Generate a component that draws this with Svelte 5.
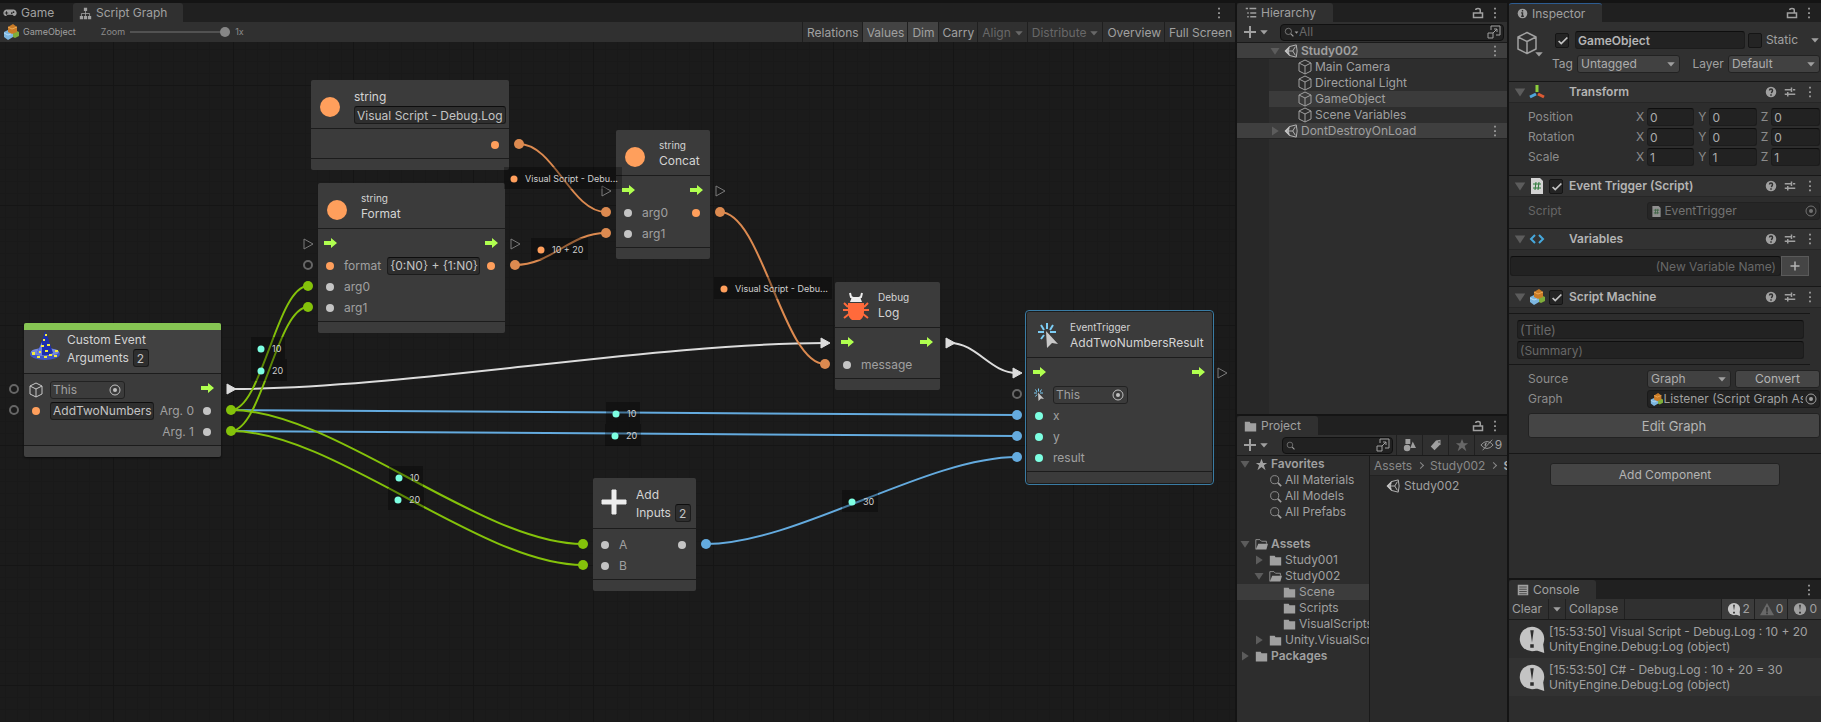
<script lang="ts">
	type Side = {
		kind: 'flow' | 'value';
		tone?: string;
		icon?: string;
		label?: string;
		field?: string;
		fieldWidth?: number;
		object?: boolean;
		pin?: string;
	};
	type Row = { left?: Side; right?: Side };
	type GraphNode = {
		id: string;
		x: number;
		y: number;
		w: number;
		head: number;
		icon: string;
		title: string;
		subtitle?: string;
		count?: string;
		text?: string;
		event?: boolean;
		selected?: boolean;
		rows: Row[];
	};

	const ORANGE = '#ff9f5c';
	const AQUA = '#7dffe2';
	const GREY = '#c4c4c4';
	const W_ORANGE = '#dc8a50';
	const W_GREEN = '#84c20a';
	const W_BLUE = '#64abdf';
	const W_WHITE = '#dcdcdc';

	const nodes: GraphNode[] = [
		{
			id: 'literal', x: 311, y: 38, w: 198, head: 48, icon: 'orb', title: 'string', text: 'Visual Script - Debug.Log',
			rows: [{ right: { kind: 'value', tone: ORANGE, pin: W_ORANGE } }]
		},
		{
			id: 'format', x: 318, y: 141, w: 187, head: 45, icon: 'orb', subtitle: 'string', title: 'Format',
			rows: [
				{ left: { kind: 'flow' }, right: { kind: 'flow' } },
				{
					left: { kind: 'value', tone: ORANGE, label: 'format', field: '{0:N0} + {1:N0}', fieldWidth: 93 },
					right: { kind: 'value', tone: ORANGE, pin: W_ORANGE }
				},
				{ left: { kind: 'value', tone: GREY, label: 'arg0', pin: W_GREEN } },
				{ left: { kind: 'value', tone: GREY, label: 'arg1', pin: W_GREEN } }
			]
		},
		{
			id: 'event', x: 24, y: 281, w: 197, head: 50, icon: 'hat', title: 'Custom Event', count: 'Arguments', event: true,
			rows: [
				{ left: { kind: 'value', icon: 'cube', field: 'This', object: true }, right: { kind: 'flow', pin: W_WHITE } },
				{
					left: { kind: 'value', tone: ORANGE, field: 'AddTwoNumbers', fieldWidth: 104 },
					right: { kind: 'value', tone: GREY, label: 'Arg. 0', pin: W_GREEN }
				},
				{ right: { kind: 'value', tone: GREY, label: 'Arg. 1', pin: W_GREEN } }
			]
		},
		{
			id: 'concat', x: 616, y: 88, w: 94, head: 45, icon: 'orb', subtitle: 'string', title: 'Concat',
			rows: [
				{ left: { kind: 'flow' }, right: { kind: 'flow' } },
				{
					left: { kind: 'value', tone: GREY, label: 'arg0', pin: W_ORANGE },
					right: { kind: 'value', tone: ORANGE, pin: W_ORANGE }
				},
				{ left: { kind: 'value', tone: GREY, label: 'arg1', pin: W_ORANGE } }
			]
		},
		{
			id: 'log', x: 835, y: 240, w: 105, head: 45, icon: 'bug', subtitle: 'Debug', title: 'Log',
			rows: [
				{ left: { kind: 'flow', pin: W_WHITE }, right: { kind: 'flow', pin: W_WHITE } },
				{ left: { kind: 'value', tone: GREY, label: 'message', pin: W_ORANGE } }
			]
		},
		{
			id: 'trigger', x: 1027, y: 270, w: 185, head: 45, icon: 'click', subtitle: 'EventTrigger', title: 'AddTwoNumbersResult',
			selected: true,
			rows: [
				{ left: { kind: 'flow', pin: W_WHITE }, right: { kind: 'flow' } },
				{ left: { kind: 'value', icon: 'click', field: 'This', object: true } },
				{ left: { kind: 'value', tone: AQUA, label: 'x', pin: W_BLUE } },
				{ left: { kind: 'value', tone: AQUA, label: 'y', pin: W_BLUE } },
				{ left: { kind: 'value', tone: AQUA, label: 'result', pin: W_BLUE } }
			]
		},
		{
			id: 'add', x: 593, y: 436, w: 103, head: 50, icon: 'plus', title: 'Add', count: 'Inputs',
			rows: [
				{
					left: { kind: 'value', tone: GREY, label: 'A', pin: W_GREEN },
					right: { kind: 'value', tone: GREY, pin: W_BLUE }
				},
				{ left: { kind: 'value', tone: GREY, label: 'B', pin: W_GREEN } }
			]
		}
	];

	// [from node, row, to node, row, color]
	const links: [string, number, string, number, string][] = [
		['event', 0, 'log', 0, W_WHITE],
		['log', 0, 'trigger', 0, W_WHITE],
		['event', 1, 'trigger', 2, W_BLUE],
		['event', 2, 'trigger', 3, W_BLUE],
		['event', 1, 'format', 2, W_GREEN],
		['event', 2, 'format', 3, W_GREEN],
		['event', 1, 'add', 0, W_GREEN],
		['event', 2, 'add', 1, W_GREEN],
		['add', 0, 'trigger', 4, W_BLUE],
		['literal', 0, 'concat', 1, W_ORANGE],
		['format', 1, 'concat', 2, W_ORANGE],
		['concat', 1, 'log', 1, W_ORANGE]
	];

	const values = [
		{ x: 504, y: 125, tone: ORANGE, text: 'Visual Script - Debu...' },
		{ x: 531, y: 196, tone: ORANGE, text: '10 + 20' },
		{ x: 251, y: 295, tone: AQUA, text: '10' },
		{ x: 251, y: 317, tone: AQUA, text: '20' },
		{ x: 714, y: 235, tone: ORANGE, text: 'Visual Script - Debu...' },
		{ x: 606, y: 360, tone: AQUA, text: '10' },
		{ x: 605, y: 382, tone: AQUA, text: '20' },
		{ x: 389, y: 424, tone: AQUA, text: '10' },
		{ x: 388, y: 446, tone: AQUA, text: '20' },
		{ x: 842, y: 448, tone: AQUA, text: '30' }
	];

	const large = ['orb', 'hat', 'bug', 'plus', 'click'];

	function pinAt(node: GraphNode, side: 'left' | 'right', row: number) {
		return {
			x: side === 'left' ? node.x - 10 : node.x + node.w + 10,
			y: node.y + node.head + 16 + row * 21
		};
	}

	function wire([from, fromRow, to, toRow]: [string, number, string, number, string]) {
		const a = pinAt(nodes.find((n) => n.id === from)!, 'right', fromRow);
		const b = pinAt(nodes.find((n) => n.id === to)!, 'left', toRow);
		const dx = b.x - a.x;
		const bend = dx * (dx > 150 ? 0.29 : 0.4);
		return `M${a.x} ${a.y}C${a.x + bend} ${a.y} ${b.x - bend} ${b.y} ${b.x} ${b.y}`;
	}

	const pins = nodes.flatMap((node) =>
		node.rows.flatMap((row, i) =>
			(['left', 'right'] as const)
				.filter((side) => row[side])
				.map((side) => ({ ...pinAt(node, side, i), kind: row[side]!.kind, color: row[side]!.pin }))
		)
	);

	const objects = ['Main Camera', 'Directional Light', 'GameObject', 'Scene Variables'];

	const tree = [
		{ depth: 0, fold: 'open', icon: 'star', text: 'Favorites', bold: true },
		{ depth: 1, icon: 'search', text: 'All Materials' },
		{ depth: 1, icon: 'search', text: 'All Models' },
		{ depth: 1, icon: 'search', text: 'All Prefabs' },
		{ depth: 0, text: '' },
		{ depth: 0, fold: 'open', icon: 'folderOpen', text: 'Assets', bold: true },
		{ depth: 1, fold: 'closed', icon: 'folder', text: 'Study001' },
		{ depth: 1, fold: 'open', icon: 'folderOpen', text: 'Study002' },
		{ depth: 2, icon: 'folder', text: 'Scene', selected: true },
		{ depth: 2, icon: 'folder', text: 'Scripts' },
		{ depth: 2, icon: 'folder', text: 'VisualScripts' },
		{ depth: 1, fold: 'closed', icon: 'folder', text: 'Unity.VisualScripting' },
		{ depth: 0, fold: 'closed', icon: 'folder', text: 'Packages', bold: true }
	];

	const transform = [
		{ label: 'Position', values: ['0', '0', '0'] },
		{ label: 'Rotation', values: ['0', '0', '0'] },
		{ label: 'Scale', values: ['1', '1', '1'] }
	];

	const logs = ['[15:53:50] Visual Script - Debug.Log : 10 + 20', '[15:53:50] C# - Debug.Log : 10 + 20 = 30'];
</script>

{#snippet icon(name: string, size = 16, color = 'currentColor')}
	<svg class="icon" width={size} height={size} viewBox={large.includes(name) ? '0 0 32 32' : '0 0 16 16'} fill={color} aria-hidden="true">
		{#if name === 'orb'}
			<circle cx="14" cy="19" r="10" fill="#ff9f5c" />
		{:else if name === 'hat'}
			<ellipse cx="16" cy="23" rx="15" ry="6" fill="#3f55c4" />
			<ellipse cx="16" cy="21" rx="14" ry="4" fill="#7488da" />
			<path d="M16 0l3 7 5 15q-8 5-16 0l6-15z" fill="#1c2fae" />
			<path d="M13 11l-5 11q2 2 5 3z" fill="#6d7fe0" />
			<path d="M16 3h2v2h-2zM14 8h2v2h-2zM18 13h3v2h-3zM12 14h3v2h-3zM16 19h3v2h-3zM10 20h2v2h-2zM3 21h3v3H3zM8 25h3v2H8zM15 25h3v2h-3zM20 23h3v2h-3zM26 19h3v2h-3zM25 24h3v2h-3z" fill="#f3ea3c" />
		{:else if name === 'bug'}
			<path d="M10 3l1 4 2 1h6l2-1 1-4" fill="none" stroke="#ededed" stroke-width="2" />
			<path d="M12 7h8l2 5H10z" fill="#ededed" />
			<path d="M8 13h16v9q0 5-4 8h-8q-4-3-4-8z" fill="#ff6a3b" />
			<path d="M8 17L4 13M8 20H3M9 24l-5 4M24 17l4-4M24 20h5M23 24l5 4" stroke="#ff6a3b" stroke-width="2" fill="none" />
		{:else if name === 'plus'}
			<path d="M14 4h4v10h10v4H18v10h-4V18H4v-4h10z" fill="#ededed" stroke="#ededed" stroke-linejoin="round" />
		{:else if name === 'click'}
			<path d="M15 3v6M9 5l3 5M21 5l-3 5M6 12h6M24 12h-6M9 19l3-4" stroke="#7ccdf5" stroke-width="2" fill="none" />
			<path d="M14 11l12 13-6-1-5 5z" fill="#c8c8c8" />
		{:else if name === 'arrow'}
			<path d="M2 4h7V1l6 5-6 5V8H2z" fill="#b0ff4f" />
		{:else if name === 'dot'}
			<circle cx="8" cy="8" r="4" />
		{:else if name === 'cube'}
			<path d="M8 1l6 3v8l-6 3-6-3V4zM2 4l6 3 6-3M8 7v8" fill="none" stroke="currentColor" stroke-linejoin="round" />
		{:else if name === 'target'}
			<circle cx="8" cy="8" r="5" fill="none" stroke="currentColor" />
			<circle cx="8" cy="8" r="2" />
		{:else if name === 'gamepad'}
			<path d="M4 4h8a4 4 0 0 1 3 6q-2 3-4 0H5q-2 3-4 0a4 4 0 0 1 3-6z" />
			<path d="M4 6v4M2 8h4" stroke="#1f1f1f" />
			<circle cx="12" cy="7" r="1" fill="#1f1f1f" /><circle cx="10" cy="8" r="1" fill="#1f1f1f" />
		{:else if name === 'sitemap'}
			<path d="M6 1h4v4H6zM1 11h4v4H1zM6 11h4v4H6zM11 11h4v4h-4z" />
			<path d="M8 5v6M3 11V8h10v3" fill="none" stroke="currentColor" />
		{:else if name === 'blocks'}
			<path d="M8 7l4-1 4 2v4l-4 2-4-2z" fill="#7fae3a" />
			<path d="M1 8l4-2 5 2v5l-5 3-4-3z" fill="#7cb6e0" />
			<path d="M1 9l4 2 5-2" fill="none" stroke="#b7dcf4" />
			<path d="M5 3l5-3 4 3v5L9 10 5 8z" fill="#c97b27" />
			<path d="M5 3l4 2 5-2" fill="none" stroke="#efab57" />
		{:else if name === 'list'}
			<path d="M1 2h3M3 8h2M3 13h2M6 2h9M7 8h8M7 13h8" fill="none" stroke="currentColor" stroke-width="2" />
		{:else if name === 'info'}
			<circle cx="8" cy="8" r="7" />
			<path d="M8 3v2M6 7h2v5M6 12h4" stroke="#2f2f2f" stroke-width="2" fill="none" />
		{:else if name === 'console'}
			<path d="M1 1h14v14H1z" />
			<path d="M3 4h10M3 7h10M3 10h10M3 13h10" stroke="#2f2f2f" />
		{:else if name === 'lock'}
			<path d="M2 8h12v6H2zM11 8V4q0-2-3-2T5 4" fill="none" stroke="currentColor" stroke-width="2" />
		{:else if name === 'more'}
			<path d="M7 2h2v2H7zM7 7h2v2H7zM7 12h2v2H7z" />
		{:else if name === 'add'}
			<path d="M7 2h2v5h5v2H9v5H7V9H2V7h5z" />
		{:else if name === 'caret'}
			<path d="M2 5h12l-6 7z" />
		{:else if name === 'open'}
			<path d="M2 4h12L8 13z" />
		{:else if name === 'closed'}
			<path d="M4 2v12l9-6z" />
		{:else if name === 'search'}
			<circle cx="7" cy="7" r="5" fill="none" stroke="currentColor" />
			<path d="M11 11l4 4" stroke="currentColor" stroke-width="2" />
		{:else if name === 'popout'}
			<path d="M5 2h9v9h-4M5 2v4M2 9h5v5H2zM7 9l4-4M8 5h3v3" fill="none" stroke="currentColor" />
		{:else if name === 'unity'}
			<path d="M1 8l5-5 8-2 1 7-1 7-8-2zM5 8h5M10 8l3-5M10 8l3 5M6 3L5 8l1 5" fill="none" stroke="#c4c4c4" stroke-width="1" stroke-linejoin="round" />
			<path d="M1 8l5-5v2L4 8l2 3v2z" fill="#c4c4c4" />
		{:else if name === 'star'}
			<path d="M8 1l2 5h5l-4 3 2 6-5-4-5 4 2-6-4-3h5z" />
		{:else if name === 'folder'}
			<path d="M1 2h6l1 2h7v10H1z" />
		{:else if name === 'folderOpen'}
			<path d="M1 14V2h5l2 2h6v3" fill="none" stroke="currentColor" />
			<path d="M4 7h12l-2 7H1z" />
		{:else if name === 'shapes'}
			<path d="M3 0h6v6H3zM12 3l4 8H9z" />
			<circle cx="5" cy="11" r="4" />
		{:else if name === 'tag'}
			<path d="M8 2l6-1v6l-8 8-5-5z" />
			<circle cx="12" cy="4" r="1" fill="#2f2f2f" />
		{:else if name === 'hidden'}
			<path d="M1 8q7-8 14 0-7 8-14 0zM3 14L14 2" fill="none" stroke="currentColor" stroke-width="1" />
			<path d="M8 5a3 3 0 0 0-2 5z" />
		{:else if name === 'axes'}
			<path d="M8 8V1" stroke="#8ccf3c" stroke-width="3" />
			<path d="M7 10l-6 3" stroke="#4fa6dc" stroke-width="3" />
			<path d="M9 10l6 3" stroke="#dd5a33" stroke-width="3" />
		{:else if name === 'script'}
			<path d="M2 0h9l3 3v13H2z" fill="#d4d4d4" />
			<path d="M7 4L6 12M10 4L9 12M4 6h8M4 10h8" stroke="#2d7a3a" fill="none" />
		{:else if name === 'angles'}
			<path d="M6 4L2 8l4 4M10 4l4 4-4 4" fill="none" stroke="#46a8dc" stroke-width="2" />
		{:else if name === 'help'}
			<circle cx="8" cy="8" r="7" />
			<path d="M6 6q0-2 2-2t2 2-2 3M8 11v2" fill="none" stroke="#2f2f2f" stroke-width="2" />
		{:else if name === 'sliders'}
			<path d="M1 5h8M12 5h3M10 2v6M1 11h3M6 11h9M5 8v6" fill="none" stroke="currentColor" stroke-width="2" />
		{:else if name === 'check'}
			<path d="M3 8l3 3 7-7" fill="none" stroke="currentColor" stroke-width="2" />
		{:else if name === 'bubble' || name === 'error'}
			<circle cx="8" cy="8" r="7" />
			{#if name === 'bubble'}<path d="M9 14l6 2-1-8z" />{/if}
			<path d="M7 3h2l-1 7zM7 11h2v2H7z" fill="#2d2d2d" />
		{:else if name === 'warning'}
			<path d="M8 1l8 14H0z" />
			<path d="M8 6v5M8 12v2" stroke="#3a3a3a" stroke-width="2" />
		{/if}
	</svg>
{/snippet}

{#snippet socket(side: Side)}
	<span class="socket" class:socket--custom={side.icon}>
		{#if side.kind === 'flow'}
			{@render icon('arrow')}
		{:else if side.icon}
			{@render icon(side.icon)}
		{:else}
			{@render icon('dot', 16, side.tone)}
		{/if}
	</span>
{/snippet}

{#snippet componentHead(name: string, title: string, checkbox: boolean)}
	<header class="component__head">
		<span class="fold">{@render icon('open', 14)}</span>
		{@render icon(name)}
		<span class="component__toggle">
			{#if checkbox}
				<label class="check"><input type="checkbox" checked aria-label={`${title} enabled`} />{@render icon('check', 14)}</label>
			{/if}
		</span>
		<h3>{title}</h3>
		<span class="component__tools">
			<button aria-label="Help">{@render icon('help', 12)}</button>
			<button aria-label="Presets">{@render icon('sliders', 12)}</button>
			<button aria-label="Component menu">{@render icon('more', 14)}</button>
		</span>
	</header>
{/snippet}

<div class="editor">
	<main class="window graph">
		<div class="tabs">
			<button class="tab tab--game">{@render icon('gamepad', 14)}Game</button>
			<button class="tab tab--active tab--graph">{@render icon('sitemap', 13)}Script Graph</button>
			<button class="tabs__menu tabs__menu--graph" aria-label="Graph window menu">{@render icon('more', 14)}</button>
		</div>
		<div class="toolbar graph__toolbar">
			<button class="crumb">{@render icon('blocks')}GameObject</button>
			<label class="zoom">Zoom <input type="range" min="0" max="1" step="0.1" value="1" /> 1x</label>
			<div class="graph__actions">
				<button>Relations</button>
				<button class="on">Values</button>
				<button class="on">Dim</button>
				<button>Carry</button>
				<button class="dim">Align {@render icon('caret', 10)}</button>
				<button class="dim">Distribute {@render icon('caret', 10)}</button>
				<button>Overview</button>
				<button>Full Screen</button>
			</div>
		</div>

		<div class="canvas">
			{#each nodes as node (node.id)}
				<article
					class="node"
					class:node--event={node.event}
					class:node--selected={node.selected}
					style:left={`${node.x}px`}
					style:top={`${node.y}px`}
					style:width={`${node.w}px`}
				>
					<header class="node__head" style:height={`${node.head}px`}>
						{@render icon(node.icon, 32)}
						<div class="node__titles">
							{#if node.subtitle}<p class="node__subtitle">{node.subtitle}</p>{/if}
							<h2 class:short={node.subtitle}>{node.title}</h2>
							{#if node.text}<input class="field field--node" value={node.text} aria-label="String value" />{/if}
							{#if node.count}
								<label class="node__count">{node.count} <input class="field field--node" value="2" /></label>
							{/if}
						</div>
					</header>
					<div class="node__body">
						{#each node.rows as row}
							<div class="row">
								{#if row.left}
									<label class="row__side">
										{@render socket(row.left)}
										{#if row.left.label}<span>{row.left.label}</span>{/if}
										{#if row.left.object}
											<span class="object">
												<input value={row.left.field} aria-label="Target" />
												<button aria-label="Pick target">{@render icon('target')}</button>
											</span>
										{:else if row.left.field}
											<input class="field field--node" value={row.left.field} style:width={`${row.left.fieldWidth}px`} aria-label={row.left.label ?? 'Event name'} />
										{/if}
									</label>
								{/if}
								{#if row.right}
									<span class="row__side row__side--right">
										{#if row.right.label}<span>{row.right.label}</span>{/if}
										{@render socket(row.right)}
									</span>
								{/if}
							</div>
						{/each}
					</div>
					<footer class="node__foot"></footer>
				</article>
			{/each}

			<svg class="wires" aria-hidden="true">
				{#each links as link}
					<path d={wire(link)} fill="none" stroke={link[4]} stroke-width="2" />
				{/each}
				{#each pins as pin}
					{#if pin.kind === 'flow'}
						<path
							d={`M${pin.x - 4} ${pin.y - 5}l9 5-9 5z`}
							fill={pin.color ?? '#1a1a1a'}
							stroke={pin.color ?? '#7a7a7a'}
						/>
					{:else if pin.color}
						<circle cx={pin.x} cy={pin.y} r="5" fill={pin.color} />
					{:else}
						<circle cx={pin.x} cy={pin.y} r="4" fill="#1a1a1a" stroke="#666" stroke-width="2" />
					{/if}
				{/each}
			</svg>

			{#each values as value}
				<div class="value" style:left={`${value.x}px`} style:top={`${value.y}px`}>
					{@render icon('dot', 14, value.tone)}{value.text}
				</div>
			{/each}
		</div>
	</main>

	<div class="column column--middle">
		<section class="window">
			<div class="tabs">
				<button class="tab tab--active tab--hierarchy">{@render icon('list', 12)}Hierarchy</button>
				<button class="tabs__menu" aria-label="Lock hierarchy">{@render icon('lock', 12)}</button>
				<button aria-label="Hierarchy menu">{@render icon('more', 14)}</button>
			</div>
			<div class="toolbar">
				<button class="create" aria-label="Create object">{@render icon('add', 16)}{@render icon('caret', 10)}</button>
				<div class="search">
					{@render icon('search', 10)}{@render icon('caret', 5)}
					<input placeholder="All" aria-label="Search hierarchy" />
					<button aria-label="Open search window">{@render icon('popout')}</button>
				</div>
			</div>
			<div class="hierarchy">
				<div class="scene bold">
					<span class="fold">{@render icon('open', 12)}</span>{@render icon('unity', 14)}<span>Study002</span>
					<button aria-label="Scene menu">{@render icon('more', 14)}</button>
				</div>
				{#each objects as object}
					<div class="object-row" class:object-row--selected={object === 'GameObject'}>{@render icon('cube')}{object}</div>
				{/each}
				<div class="scene">
					<span class="fold">{@render icon('closed', 12)}</span>{@render icon('unity', 14)}<span>DontDestroyOnLoad</span>
					<button aria-label="Scene menu">{@render icon('more', 14)}</button>
				</div>
			</div>
		</section>

		<section class="window">
			<div class="tabs">
				<button class="tab tab--active tab--project">{@render icon('folder', 13)}Project</button>
				<button class="tabs__menu" aria-label="Lock project">{@render icon('lock', 12)}</button>
				<button aria-label="Project menu">{@render icon('more', 14)}</button>
			</div>
			<div class="toolbar toolbar--project">
				<button class="create" aria-label="Create asset">{@render icon('add', 16)}{@render icon('caret', 10)}</button>
				<div class="search">
					{@render icon('search', 9)}
					<input aria-label="Search project" />
					<button aria-label="Open search window">{@render icon('popout')}</button>
				</div>
				<button class="filter" aria-label="Search by type">{@render icon('shapes', 13)}</button>
				<button class="filter" aria-label="Search by label">{@render icon('tag', 12)}</button>
				<button class="filter faint" aria-label="Save search">{@render icon('star', 14)}</button>
				<button class="filter filter--last" aria-label="Hidden packages">{@render icon('hidden', 14)}9</button>
			</div>
			<div class="project">
				<div class="tree">
					{#each tree as item}
						<div class={`tree__item depth-${item.depth}`} class:bold={item.bold} class:tree__item--selected={item.selected}>
							<span class="fold">{#if item.fold}{@render icon(item.fold, 12)}{/if}</span>
							{#if item.icon}{@render icon(item.icon, 13)}{/if}
							<span>{item.text}</span>
						</div>
					{/each}
				</div>
				<div class="assets">
					<nav class="path"><a href="#assets">Assets</a><i></i><a href="#study">Study002</a><i></i><b>Scene</b></nav>
					<div class="asset">{@render icon('unity', 14)}Study002</div>
				</div>
			</div>
		</section>
	</div>

	<div class="column column--right">
		<section class="window inspector">
			<div class="tabs">
				<button class="tab tab--active tab--inspector">{@render icon('info', 11)}Inspector</button>
				<button class="tabs__menu" aria-label="Lock inspector">{@render icon('lock', 12)}</button>
				<button aria-label="Inspector menu">{@render icon('more', 14)}</button>
			</div>

			<div class="identity">
				<button class="identity__icon" aria-label="Select icon">{@render icon('cube', 24)}<span>{@render icon('caret', 10)}</span></button>
				<div class="identity__rows">
					<div class="identity__row">
						<label class="check"><input type="checkbox" checked aria-label="Active" />{@render icon('check', 14)}</label>
						<input class="field field--name" value="GameObject" aria-label="Name" />
						<label class="static"><span class="check"><input type="checkbox" />{@render icon('check', 14)}</span>Static</label>
						<button class="static__menu" aria-label="Static flags">{@render icon('caret', 10)}</button>
					</div>
					<div class="identity__row identity__row--tags">
						<label class="tagged">Tag <span class="select"><select><option>Untagged</option></select>{@render icon('caret', 10)}</span></label>
						<label class="layer">Layer <span class="select"><select><option>Default</option></select>{@render icon('caret', 10)}</span></label>
					</div>
				</div>
			</div>

			<section class="component">
				{@render componentHead('axes', 'Transform', false)}
				<div class="transform">
					{#each transform as row}
						<div class="transform__row">
							<span>{row.label}</span>
							{#each row.values as value, i}
								<label>{'XYZ'[i]} <input class="field" {value} /></label>
							{/each}
						</div>
					{/each}
				</div>
			</section>

			<section class="component">
				{@render componentHead('script', 'Event Trigger (Script)', true)}
				<div class="property property--script">
					<span>Script</span>
					<div class="reference">{@render icon('script', 11)}<span>EventTrigger</span><button aria-label="Pick script" disabled>{@render icon('target')}</button></div>
				</div>
			</section>

			<section class="component">
				{@render componentHead('angles', 'Variables', false)}
				<div class="variable">
					<input class="field" placeholder="(New Variable Name)" aria-label="New variable name" />
					<button class="button" aria-label="Add variable">{@render icon('add', 12)}</button>
				</div>
			</section>

			<section class="component">
				{@render componentHead('blocks', 'Script Machine', true)}
				<div class="summary">
					<input class="field field--title" placeholder="(Title)" aria-label="Title" />
					<input class="field" placeholder="(Summary)" aria-label="Summary" />
				</div>
				<div class="machine">
					<div class="property property--source">
						<label for="source">Source</label>
						<span class="select"><select id="source"><option>Graph</option></select>{@render icon('caret', 10)}</span>
						<button class="button">Convert</button>
					</div>
					<div class="property">
						<span>Graph</span>
						<div class="reference">{@render icon('blocks', 13)}<span>Listener (Script Graph Asset)</span><button aria-label="Pick graph">{@render icon('target')}</button></div>
					</div>
					<button class="button button--edit">Edit Graph</button>
				</div>
			</section>

			<div class="component adder"><button class="button">Add Component</button></div>
		</section>

		<section class="window console">
			<div class="tabs">
				<button class="tab tab--active tab--console">{@render icon('console', 12)}Console</button>
				<button class="tabs__menu tabs__menu--console" aria-label="Console menu">{@render icon('more', 14)}</button>
			</div>
			<div class="toolbar console__toolbar">
				<button class="clear">Clear</button>
				<button class="clear__menu" aria-label="Clear options">{@render icon('caret', 10)}</button>
				<button class="collapse">Collapse</button>
				<span class="counts">
					<button class="bright">{@render icon('bubble', 14)}2</button>
					<button><span class="faint">{@render icon('warning', 14)}</span>0</button>
					<button>{@render icon('error', 14)}0</button>
				</span>
			</div>
			{#each logs as log}
				<div class="log">
					{@render icon('bubble', 28)}
					<p>{log}<br />UnityEngine.Debug:Log (object)</p>
				</div>
			{/each}
		</section>
	</div>
</div>

<style>
	:global(body) {
		background: #141414;
	}

	.editor {
		box-sizing: border-box;
		display: grid;
		grid-template-columns: 1235fr 270fr 312fr;
		gap: 2px;
		min-height: 100vh;
		padding-top: 3px;
		background: #141414;
		color: #a0a0a0;
		font: 12px/16px Inter, "Liberation Sans", sans-serif;
	}

	.editor :global(*) {
		box-sizing: border-box;
	}

	h2,
	h3,
	p {
		margin: 0;
		font: inherit;
	}

	button {
		display: inline-flex;
		align-items: center;
		justify-content: center;
		padding: 0;
		border: 0;
		background: none;
		color: inherit;
		font: inherit;
		white-space: nowrap;
	}

	input,
	select {
		min-width: 0;
		margin: 0;
		color: inherit;
		font: inherit;
	}

	.icon {
		display: block;
		flex: none;
	}

	.bold {
		font-weight: 600;
	}

	.faint {
		color: #686868;
	}

	.fold {
		display: flex;
		flex: none;
		color: #5c5c5c;
	}

	.column {
		display: grid;
		gap: 2px;
		min-width: 0;
	}

	.column--middle {
		grid-template-rows: 411fr 306fr;
	}

	.column--right {
		grid-template-rows: 575fr 142fr;
	}

	.window {
		display: flex;
		flex-direction: column;
		min-width: 0;
		overflow: hidden;
		background: #2d2d2d;
	}

	.tabs {
		display: flex;
		flex: none;
		height: 19px;
		padding-right: 5px;
		background: #202020;
	}

	.tab {
		gap: 4px;
		padding: 1px 16px 0 8px;
		justify-content: flex-start;
		border-radius: 3px 3px 0 0;
	}

	.tab--active {
		background: #303030;
	}

	.tab--game {
		width: 73px;
		padding-left: 3px;
	}

	.tab--graph {
		width: 110px;
		padding-right: 0;
		padding-left: 6px;
	}

	.tab--hierarchy {
		width: 96px;
	}

	.tab--project {
		width: 81px;
		padding-right: 0;
		padding-left: 7px;
	}

	.tab--inspector {
		width: 93px;
		border-top: 1px solid #2d5c91;
		gap: 4px;
	}

	.tab--console {
		width: 87px;
		padding-right: 0;
	}

	.tabs__menu {
		margin-left: auto;
		margin-right: 4px;
	}

	.tabs__menu--console {
		margin-right: 0;
	}

	.toolbar {
		display: flex;
		flex: none;
		align-items: center;
		height: 21px;
		border-bottom: 1px solid #1a1a1a;
		background: #303030;
	}

	/* graph window */

	.graph__toolbar {
		height: 20px;
		border: 0;
		font-size: 9px;
	}

	.crumb {
		gap: 4px;
		padding-left: 3px;
	}

	.zoom {
		display: flex;
		align-items: center;
		gap: 5px;
		margin-left: 25px;
		color: #8c8c8c;
	}

	.zoom input {
		appearance: none;
		width: 100px;
		height: 12px;
		background: linear-gradient(#525252, #525252) center / 100% 2px no-repeat;
	}

	.zoom input::-webkit-slider-thumb {
		appearance: none;
		width: 10px;
		height: 10px;
		border-radius: 50%;
		background: #868686;
	}

	.graph__actions {
		display: flex;
		align-self: stretch;
		margin-left: auto;
		font-size: 12px;
	}

	.graph__actions button {
		padding: 1px 3px 0 4px;
		border-left: 1px solid #1f1f1f;
	}

	.graph__actions .on {
		background: #434343;
	}

	.graph__actions .dim {
		gap: 3px;
		color: #686868;
	}

	.canvas {
		position: relative;
		flex: 1;
		overflow: hidden;
		background-color: #1b1b1b;
		background-image:
			linear-gradient(90deg, #151515 1px, transparent 1px),
			linear-gradient(#151515 1px, transparent 1px),
			linear-gradient(90deg, #191919 1px, transparent 1px),
			linear-gradient(#191919 1px, transparent 1px);
		background-position: 113px 43px;
		background-size:
			120px 120px,
			120px 120px,
			12px 12px,
			12px 12px;
	}

	.wires {
		position: absolute;
		inset: 0;
		width: 100%;
		height: 100%;
		pointer-events: none;
	}

	.node {
		position: absolute;
		border-radius: 2px;
		overflow: hidden;
		background: #3b3b3b;
	}

	.node--event {
		background: #414141;
		box-shadow: 0 1px 2px #0c0c0c;
	}

	.node--event .node__head {
		border-top: 7px solid #86c553;
		padding-top: 1px;
	}

	.node--selected {
		outline: 1px solid #3a7ca4;
		outline-offset: 1px;
	}

	.node__head {
		display: flex;
		gap: 6px;
		padding: 8px 5px 0;
		color: #d4d4d4;
	}

	.node__titles {
		white-space: nowrap;
	}

	.node__titles h2 {
		height: 18px;
		line-height: 18px;
	}

	.node__titles h2.short {
		height: 17px;
	}

	.node__subtitle {
		height: 14px;
		font-size: 10px;
		line-height: 14px;
	}

	.node__head .field {
		width: 152px;
	}

	.node__count {
		display: flex;
		align-items: center;
		gap: 4px;
	}

	.node__count .field {
		width: 16px;
		padding: 0 3px;
	}

	.node__body {
		padding: 5px 6px 3px 4px;
		border-top: 1px solid #1c1c1c;
		border-bottom: 1px solid #1c1c1c;
		background: #3b3b3b;
	}

	.node__foot {
		height: 11px;
	}

	.row,
	.row__side {
		display: flex;
		align-items: center;
	}

	.row {
		height: 21px;
	}

	.row__side {
		gap: 6px;
	}

	.row__side--right {
		margin-left: auto;
		gap: 5px;
	}

	.socket--custom {
		color: #c8c8c8;
	}

	.object {
		display: flex;
		align-items: center;
		width: 75px;
		height: 18px;
		border: 1px solid #222;
		border-radius: 3px;
	}

	.object input {
		width: 56px;
		height: 16px;
		padding: 0 2px;
		border: 0;
		background: none;
	}

	.object button {
		color: #c0c0c0;
	}

	.value {
		position: absolute;
		display: flex;
		align-items: center;
		gap: 4px;
		height: 22px;
		padding: 2px 4px 0 3px;
		background: rgb(0 0 0 / 30%);
		color: #d0d0d0;
		font-size: 9px;
		line-height: 16px;
		white-space: nowrap;
	}

	/* shared controls */

	.field {
		height: 18px;
		padding: 0 0 0 2px;
		border: 1px solid #1c1c1c;
		border-top-color: #0e0e0e;
		border-radius: 3px;
		background: #222;
	}

	.field--node {
		background: #2e2e2e;
		color: #c4c4c4;
	}

	.field::placeholder,
	.search input::placeholder {
		color: #686868;
		opacity: 1;
	}

	.button {
		border: 1px solid #222;
		border-radius: 3px;
		background: #454545;
		color: #b4b4b4;
	}

	.check {
		display: grid;
		flex: none;
		width: 14px;
		height: 15px;
		border: 1px solid #151515;
		border-radius: 2px;
		background: #242424;
		color: #c4c4c4;
		place-items: center;
	}

	.check input {
		grid-area: 1 / 1;
		appearance: none;
		width: 14px;
		height: 14px;
	}

	.check :global(svg) {
		grid-area: 1 / 1;
		visibility: hidden;
	}

	.check input:checked + :global(svg) {
		visibility: visible;
	}

	.select {
		display: inline-grid;
		flex: 1;
		align-items: center;
	}

	.select select {
		grid-area: 1 / 1;
		appearance: none;
		width: 100%;
		height: 18px;
		padding: 0 3px;
		border: 1px solid #222;
		border-radius: 3px;
		background: #414141;
		color: #adadad;
	}

	.select :global(svg) {
		grid-area: 1 / 1;
		justify-self: end;
		margin-right: 4px;
		pointer-events: none;
	}

	.create {
		flex: none;
		gap: 1px;
		padding: 0 8px 0 5px;
	}

	.search {
		display: flex;
		flex: 1;
		align-items: center;
		min-width: 0;
		height: 17px;
		margin: 0 3px;
		padding: 0 1px 0 3px;
		border: 1px solid #111;
		border-radius: 4px;
		background: #212121;
	}

	.search input {
		flex: 1;
		padding: 0;
		border: 0;
		background: none;
	}

	/* hierarchy */

	.hierarchy {
		flex: 1;
		background: linear-gradient(90deg, #282828 32px, #2d2d2d 32px);
	}

	.scene {
		display: flex;
		align-items: center;
		height: 16px;
		padding: 0 5px 0 32px;
		border-bottom: 1px solid #232323;
		background: #3f3f3f;
	}

	.scene .fold {
		margin-right: 3px;
	}

	.scene > span:not(.fold) {
		margin-left: 3px;
	}

	.scene button {
		margin-left: auto;
	}

	.object-row {
		display: flex;
		align-items: center;
		gap: 2px;
		height: 16px;
		padding-left: 28px;
		margin-left: 32px;
	}

	.object-row--selected {
		background: #3b3b3b;
	}

	/* project */

	.toolbar--project .search {
		margin: 0 3px 0 5px;
	}

	.filter {
		flex: none;
		align-self: stretch;
		width: 26px;
		border-left: 1px solid #202020;
	}

	.filter--last {
		width: 33px;
		gap: 1px;
	}

	.project {
		display: grid;
		flex: 1;
		grid-template-columns: 132fr 137fr;
		gap: 1px;
		background: #1a1a1a;
	}

	.tree,
	.assets {
		min-width: 0;
		overflow: hidden;
		background: #2d2d2d;
		white-space: nowrap;
	}

	.assets {
		background: #292929;
	}

	.tree__item {
		display: flex;
		align-items: center;
		gap: 4px;
		height: 16px;
		padding-left: 2px;
	}

	.tree__item :global(svg + span) {
		margin-left: -1px;
	}

	.tree__item .fold {
		width: 12px;
	}

	.depth-1 {
		padding-left: 16px;
	}

	.depth-2 {
		padding-left: 30px;
	}

	.tree__item--selected {
		background: #3c3c3c;
	}

	.path {
		display: flex;
		align-items: center;
		height: 20px;
		padding-left: 4px;
		border-bottom: 1px solid #222;
		background: #303030;
		color: #888;
	}

	.path a {
		color: inherit;
		text-decoration: none;
	}

	.path i {
		flex: none;
		width: 5px;
		height: 5px;
		margin: 0 7px 0 6px;
		border: solid;
		border-width: 1px 1px 0 0;
		transform: rotate(45deg);
	}

	.path b {
		color: #b0b0b0;
		font-weight: 600;
	}

	.asset {
		display: flex;
		align-items: center;
		gap: 4px;
		height: 20px;
		padding-left: 16px;
	}

	/* inspector */

	.identity {
		display: flex;
		gap: 4px;
		height: 59px;
		padding: 9px 1px 0 5px;
		background: #303030;
	}

	.identity__icon {
		position: relative;
		align-self: flex-start;
		width: 26px;
	}

	.identity__icon span {
		position: absolute;
		top: 18px;
		right: -4px;
	}

	.identity__rows {
		flex: 1;
		min-width: 0;
	}

	.identity__row {
		display: flex;
		align-items: center;
		height: 18px;
		padding-left: 11px;
	}

	.identity__row--tags {
		margin-top: 6px;
		padding-left: 8px;
		gap: 13px;
	}

	.tagged,
	.layer {
		display: flex;
		flex: 1;
		align-items: center;
		gap: 4px;
	}

	.field--name {
		flex: 1;
		margin: 0 3px 0 6px;
		color: #b4b4b4;
		font-weight: 600;
	}

	.static {
		display: flex;
		align-items: center;
		gap: 4px;
	}

	.static__menu {
		width: 22px;
		padding-left: 12px;
		justify-content: flex-start;
	}

	.component {
		border-top: 1px solid #171717;
	}

	.component__head {
		display: flex;
		align-items: center;
		height: 21px;
		padding: 0 4px;
		border-bottom: 1px solid #262626;
		background: #323232;
	}

	.component__head .fold {
		margin-right: 2px;
	}

	.component__toggle {
		width: 24px;
		padding-left: 4px;
	}

	.component__head h3 {
		flex: 1;
		color: #b4b4b4;
		font-weight: 600;
	}

	.component__tools {
		display: flex;
		align-items: center;
		gap: 7px;
	}

	.transform {
		display: grid;
		gap: 2px;
		padding: 5px 1px 9px 19px;
	}

	.transform__row {
		display: grid;
		grid-template-columns: 105fr 59fr 59fr 60fr;
		column-gap: 4px;
		align-items: center;
	}

	.transform__row > span,
	.property > span:first-child,
	.property > label {
		color: #8c8c8c;
	}

	.transform__row label {
		display: flex;
		align-items: center;
		gap: 3px;
		color: #8c8c8c;
	}

	.transform__row .field {
		flex: 1;
		width: 0;
		color: #adadad;
	}

	.property {
		display: grid;
		grid-template-columns: 119fr 172fr;
		align-items: center;
		height: 20px;
	}

	.property--script {
		height: 31px;
		padding: 0 1px 3px 19px;
		opacity: 0.6;
	}

	.property--source {
		grid-template-columns: 119fr 84fr 89fr;
	}

	.property--source .button {
		height: 18px;
		margin-left: 4px;
	}

	.reference {
		display: flex;
		align-items: center;
		height: 18px;
		min-width: 0;
		padding: 0 0 0 2px;
		border: 1px solid #1a1a1a;
		border-radius: 3px;
		background: #222;
	}

	.reference span {
		flex: 1;
		min-width: 0;
		overflow: hidden;
		white-space: nowrap;
	}

	.property--script .reference {
		gap: 2px;
		padding-left: 3px;
	}

	.variable {
		display: flex;
		padding: 6px 12px 10px 1px;
	}

	.variable .field {
		flex: 1;
		height: 20px;
		padding-right: 4px;
		text-align: right;
	}

	.variable .button {
		width: 28px;
		border-color: #5a5a5a;
		border-radius: 0;
	}

	.summary {
		display: grid;
		gap: 2px;
		margin: 5px 11px 0 0;
		padding: 6px 6px 5px 8px;
		border: solid #171717;
		border-width: 1px 0;
	}

	.field--title {
		height: 19px;
		font-size: 13px;
	}

	.machine {
		padding: 4px 1px 15px 19px;
	}

	.button--edit {
		width: 100%;
		height: 25px;
		margin-top: 4px;
		font-size: 13px;
	}

	.adder {
		display: flex;
		justify-content: center;
		padding: 9px 0;
	}

	.adder .button {
		width: 74%;
		height: 23px;
	}

	/* console */

	.clear,
	.clear__menu,
	.collapse {
		align-self: stretch;
		padding: 0 6px 0 3px;
		border-right: 1px solid #202020;
	}

	.clear__menu {
		padding: 0 3px;
	}

	.counts {
		display: flex;
		align-self: stretch;
		margin-left: auto;
	}

	.counts button {
		gap: 2px;
		padding: 0 4px 0 5px;
		border-left: 1px solid #202020;
		background: #3c3c3c;
	}

	.bright :global(svg) {
		color: #c8c8c8;
	}

	.log {
		display: flex;
		align-items: center;
		gap: 3px;
		height: 38px;
		padding-left: 9px;
		overflow: hidden;
		line-height: 15px;
		white-space: nowrap;
	}

	.log :global(svg) {
		color: #c4c4c4;
	}

	.log:last-child {
		background: #323232;
	}
</style>
